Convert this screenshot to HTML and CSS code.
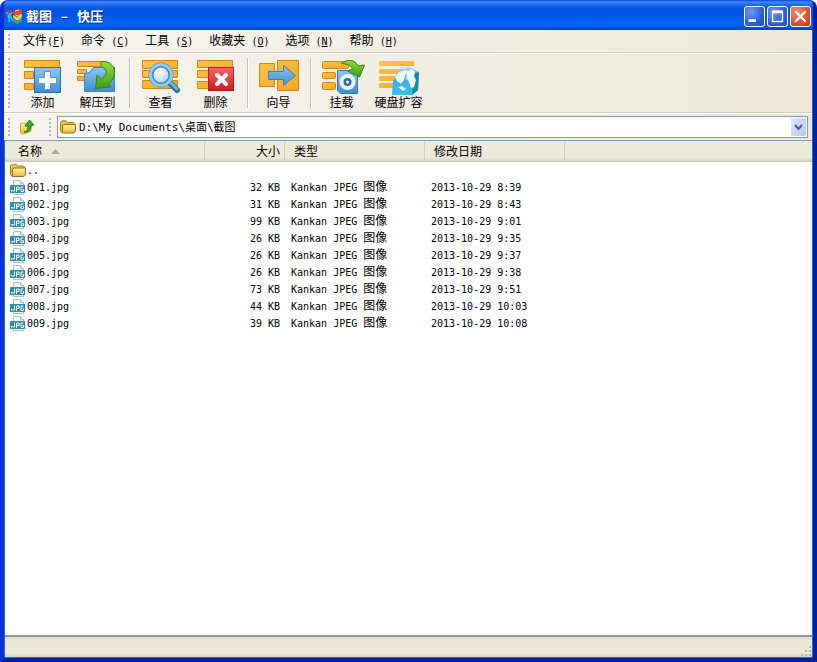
FILE: index.html
```html
<!DOCTYPE html>
<html lang="zh-CN">
<head>
<meta charset="utf-8">
<title>截图 - 快压</title>
<link rel="stylesheet" href="styles.css">
</head>
<body>
<svg class="defs" aria-hidden="true">
  <defs>
    <linearGradient id="orange" x1="0" y1="0" x2="1" y2="1"><stop offset="0" stop-color="#ffc44d"/><stop offset="1" stop-color="#f5a523"/></linearGradient>
    <linearGradient id="blue" x1="0" y1="0" x2="0" y2="1"><stop offset="0" stop-color="#8cc6ee"/><stop offset="1" stop-color="#3c8fd4"/></linearGradient>
    <linearGradient id="red" x1="0" y1="0" x2="0" y2="1"><stop offset="0" stop-color="#f36a63"/><stop offset="1" stop-color="#d0191d"/></linearGradient>
    <linearGradient id="green" x1="0" y1="0" x2="0" y2="1"><stop offset="0" stop-color="#8fdc34"/><stop offset="1" stop-color="#3d9f16"/></linearGradient>
    <linearGradient id="gold" x1="0" y1="0" x2="0" y2="1"><stop offset="0" stop-color="#fff6a6"/><stop offset="1" stop-color="#e9b730"/></linearGradient>
    <radialGradient id="lens" cx=".4" cy=".35" r=".7"><stop offset="0" stop-color="#fff"/><stop offset="1" stop-color="#a9c9dc"/></radialGradient>
    <linearGradient id="ice" x1="0" y1="0" x2="0" y2="1"><stop offset="0" stop-color="#9adcf2"/><stop offset=".5" stop-color="#38aee2"/><stop offset="1" stop-color="#36c2f0"/></linearGradient>
  </defs>
  <symbol id="folder" viewBox="0 0 16 14">
    <path d="M.5 11V2.5L2 .8h4l1.500 1.700h6l1 1V11l-1 1.500h-12z" fill="#eec34b" stroke="#a97b12"/>
    <path d="M2.500 5.500 4 4.500h11.500V11L14 13H2.500z" fill="url(#gold)" stroke="#9b7114"/>
  </symbol>
  <symbol id="jpg" viewBox="0 0 16 15">
    <path d="M3.500 .5h7l3 3v11h-10z" fill="#f5f8fa" stroke="#b3bec6"/>
    <path d="M10.500 .5v3h3" fill="#dce4ea" stroke="#b3bec6"/>
    <rect x="0" y="5" width="15" height="8" fill="#2c8fad"/>
    <path d="M4.500 6.500v4.500h-3v-1M6.500 12V7h2.500v2.500H6.500M13.500 7h-2.500v4.500h2.500V9.500h-1" fill="none" stroke="#fff"/>
  </symbol>
</svg>
<div class="window">
  <header class="titlebar">
    <svg class="app-icon" viewBox="0 0 16 16" aria-hidden="true">
      <path d="M0 5h2M1 8h3M3 5v9M6 4L4 8l3 5" fill="none" stroke="#35c5ee" stroke-width="1.500"/>
      <path d="M0 3l4-1 2 1-1 2-4-1z" fill="#e63422"/>
      <path d="M7 3l5-2 4 1v3l-5 3-4-2z" fill="#ed3b24"/>
      <path d="M7 7l4 2 5-3v3l-5 3-4-2z" fill="#f6cf24"/>
      <path d="M7 11l4 2 5-3v3l-5 3-4-2z" fill="#35ad38"/>
      <path d="M9 3l4-1M9 7l3 1 3-2M9 11l3 1 3-2" fill="none" stroke="#fff" stroke-opacity=".7"/>
    </svg>
    <h1 class="caption">截图<span class="dash">–</span>快压</h1>
    <button class="winbtn" aria-label="最小化"><svg viewBox="0 0 21 21"><path d="M4 15h8" stroke="#fff" stroke-width="3"/></svg></button>
    <button class="winbtn" aria-label="最大化"><svg viewBox="0 0 21 21"><path d="M5 16V5h11v11z" fill="none" stroke="#fff" stroke-width="1.500"/><path d="M4.500 5.500h12" stroke="#fff" stroke-width="3"/></svg></button>
    <button class="winbtn close" aria-label="关闭"><svg viewBox="0 0 21 21"><path d="M5.500 5.500l10 10M15.500 5.500l-10 10" stroke="#fff" stroke-width="2.500" stroke-linecap="round"/></svg></button>
  </header>

  <nav class="menubar">
    <i class="grip"></i>
    <button><b>文件</b>(<u>F</u>)</button>
    <button><b>命令</b> (<u>C</u>)</button>
    <button><b>工具</b> (<u>S</u>)</button>
    <button><b>收藏夹</b> (<u>O</u>)</button>
    <button><b>选项</b> (<u>N</u>)</button>
    <button><b>帮助</b> (<u>H</u>)</button>
  </nav>

  <div class="toolbar">
    <i class="grip"></i>
    <button><svg viewBox="0 0 42 36"><g fill="url(#orange)" stroke="#d9830f"><path d="M2.500 1.500h35v7h-35zM2.500 12.500h9v7h-9zM2.500 24.500h9v6h-9z"/></g><rect x="12.500" y="8.500" width="26" height="25" fill="url(#blue)" stroke="#2c73ad"/><path d="M22.500 12.500h6v6h6v6h-6v6h-6v-6h-6v-6h6z" fill="#fff" stroke="#5a9ccd"/></svg>添加</button>
    <button><svg viewBox="0 0 42 36"><g fill="url(#orange)" stroke="#d9830f"><path d="M.5 2.500h27v5h-27zM.5 10.500h9v4h-9zM.5 17.500h9v4h-9z"/></g><path d="M7.500 32.500v-18l5-1 4-5h21v24z" fill="url(#blue)" stroke="#3c86be"/><path d="M24 2.500c9-1 14 5 13.500 12C37 20 34 23 31 25l3 3-15.500 1.500L20 16l4.500 4c5-4 7.500-9-.5-12.500z" fill="url(#green)" stroke="#35860f"/></svg>解压到</button>
    <i class="separator"></i>
    <button><svg viewBox="0 0 42 36"><g fill="url(#orange)" stroke="#d9830f"><path d="M2.500 1.500h35v8h-35zM2.500 11.500h35v7h-35zM2.500 21.500h35v8h-35z"/></g><path d="M29 23l8 8" stroke="#2667a6" stroke-width="6" stroke-linecap="round"/><path d="M29 22l8 8" stroke="#72b7e8" stroke-width="3" stroke-linecap="round"/><circle cx="21" cy="16" r="10" fill="url(#lens)" stroke="#3987bd" stroke-width="5"/><circle cx="21" cy="16" r="10.500" fill="none" stroke="#8ccbf3" stroke-width="3"/></svg>查看</button>
    <button><svg viewBox="0 0 42 36"><g fill="url(#orange)" stroke="#d9830f"><path d="M2.500 1.500h35v7h-35zM2.500 11.500h12v7h-12zM2.500 22.500h12v7h-12z"/></g><rect x="13.500" y="8.500" width="25" height="23" fill="url(#red)" stroke="#b9171a"/><path d="M22 16l9 9M31 16l-9 9" stroke="#fff" stroke-width="4" stroke-linecap="round"/></svg>删除</button>
    <i class="separator"></i>
    <button><svg viewBox="0 0 42 36"><g fill="url(#orange)" stroke="#d9830f"><path d="M1.500 4.500h15v23h-15zM19.500 1.500h21v30h-21z"/></g><path d="M10.500 12.500h15v-6L37.500 16.500 25.500 26.500v-6h-15z" fill="url(#blue)" stroke="#3c7fb5"/></svg>向导</button>
    <i class="separator"></i>
    <button><svg viewBox="0 0 42 36"><g fill="url(#orange)" stroke="#d9830f"><rect x="1.500" y="2.500" width="26" height="7" rx="1"/><rect x="1.500" y="13.500" width="13" height="6" rx="1"/><rect x="1.500" y="23.500" width="13" height="7" rx="1"/></g><path d="M16.500 11.500h20v23h-17l-3-3z" fill="url(#blue)" stroke="#3974b4"/><circle cx="26.500" cy="23" r="8" fill="#e8f4fc"/><circle cx="26.500" cy="23" r="4" fill="#2c69ad"/><circle cx="26.500" cy="23" r="1.500" fill="#fff"/><path d="M20.500 4.500C26 0 34 0 37 7l6.500-1-5 12-12-6 5-2c-2-4-6-5-11-5.500z" fill="url(#green)" stroke="#35860f"/></svg>挂载</button>
    <button class="wide"><svg viewBox="0 0 42 36"><g fill="url(#orange)"><path d="M1 2h35v5H1zM1 10h35v5H1zM1 17h22v5H1zM1 24h15v5H1z"/></g><path d="M15 22l4-8 12-6 10 5-1 18-6 5H14z" fill="url(#ice)"/><path d="M36 14l5-1-1 18-6 5z" fill="#0d8da6"/><path d="M17 18l4-5 7-2 3 2-4 3-1 5-3 4-4-3zM30 12l4-2 3 3-1 4 2 4-2 7-3 1-2-6-3-4zM20 28l4-1 4 3-3 2z" fill="#edfbff"/></svg>硬盘扩容</button>
  </div>

  <div class="addressbar">
    <i class="grip"></i>
    <button class="up" aria-label="向上"><svg viewBox="0 0 16 16"><path d="M1.500 14V5L5 3.500l1 1.500 6-1v8L4 15z" fill="url(#gold)" stroke="#d8a936"/><path d="M5 13c4-1 4-3 4-6H6l4.500-6L15 6l-3 .5C12 11 10 14 5 13z" fill="#39b326" stroke="#238218"/></svg></button>
    <i class="grip"></i>
    <div class="combo">
      <svg class="folder"><use href="#folder"/></svg>
      <select aria-label="地址"><option>D:\My Documents\桌面\截图</option></select>
      <span class="arrow"><svg viewBox="0 0 15 18"><path d="M4 7l3.500 4L11 7" fill="none" stroke="#4d6185" stroke-width="2"/></svg></span>
    </div>
  </div>

  <main class="files">
    <table>
      <colgroup><col class="c-name"><col class="c-size"><col class="c-type"><col class="c-date"><col></colgroup>
      <thead><tr><th>名称<svg class="sort" viewBox="0 0 9 5"><path d="M0 5l4.500-5L9 5z" fill="#aca899"/></svg></th><th class="size">大小</th><th>类型</th><th>修改日期</th><th></th></tr></thead>
      <tbody>
        <tr><td><div class="name"><svg class="folder"><use href="#folder"/></svg>..</div></td><td></td><td></td><td></td><td></td></tr>
        <tr><td><div class="name"><svg><use href="#jpg"/></svg>001.jpg</div></td><td class="size">32 KB</td><td>Kankan JPEG <b>图像</b></td><td>2013-10-29 8:39</td><td></td></tr>
        <tr><td><div class="name"><svg><use href="#jpg"/></svg>002.jpg</div></td><td class="size">31 KB</td><td>Kankan JPEG <b>图像</b></td><td>2013-10-29 8:43</td><td></td></tr>
        <tr><td><div class="name"><svg><use href="#jpg"/></svg>003.jpg</div></td><td class="size">99 KB</td><td>Kankan JPEG <b>图像</b></td><td>2013-10-29 9:01</td><td></td></tr>
        <tr><td><div class="name"><svg><use href="#jpg"/></svg>004.jpg</div></td><td class="size">26 KB</td><td>Kankan JPEG <b>图像</b></td><td>2013-10-29 9:35</td><td></td></tr>
        <tr><td><div class="name"><svg><use href="#jpg"/></svg>005.jpg</div></td><td class="size">26 KB</td><td>Kankan JPEG <b>图像</b></td><td>2013-10-29 9:37</td><td></td></tr>
        <tr><td><div class="name"><svg><use href="#jpg"/></svg>006.jpg</div></td><td class="size">26 KB</td><td>Kankan JPEG <b>图像</b></td><td>2013-10-29 9:38</td><td></td></tr>
        <tr><td><div class="name"><svg><use href="#jpg"/></svg>007.jpg</div></td><td class="size">73 KB</td><td>Kankan JPEG <b>图像</b></td><td>2013-10-29 9:51</td><td></td></tr>
        <tr><td><div class="name"><svg><use href="#jpg"/></svg>008.jpg</div></td><td class="size">44 KB</td><td>Kankan JPEG <b>图像</b></td><td>2013-10-29 10:03</td><td></td></tr>
        <tr><td><div class="name"><svg><use href="#jpg"/></svg>009.jpg</div></td><td class="size">39 KB</td><td>Kankan JPEG <b>图像</b></td><td>2013-10-29 10:08</td><td></td></tr>
      </tbody>
    </table>
  </main>

  <footer class="statusbar">
    <svg viewBox="0 0 12 12" aria-hidden="true"><path d="M9 1h2v2H9zM9 5h2v2H9zM9 9h2v2H9zM5 5h2v2H5zM5 9h2v2H5zM1 9h2v2H1z" fill="#b8b4a2"/></svg>
  </footer>
</div>
</body>
</html>
```

FILE: styles.css
```css
* { box-sizing: border-box; }

body {
  margin: 0;
  background: #fff;
  color: #000;
  font: 10px/16px "DejaVu Sans Mono", "Noto Sans CJK SC", monospace;
}

button, select { font: inherit; color: inherit; }
button { border: 0; padding: 0; background: none; }
svg { display: block; flex: none; }
.defs { position: absolute; width: 0; height: 0; }

/* Chinese text runs two latin cells wide */
b { font-size: 12px; font-weight: 400; line-height: 16px; }

.window {
  display: flex;
  flex-direction: column;
  min-height: 100vh;
  border: solid #0831d9;
  border-width: 0 4px 4px;
  border-color: #0831d9 #001ea0 #001ea0 #0831d9;
  border-radius: 8px 8px 0 0;
  background: #ece9d8;
  box-shadow: inset 1px 0 #166aee, inset -1px -1px #166aee;
  overflow: hidden;
}

.titlebar {
  display: flex;
  align-items: center;
  gap: 2px;
  height: 30px;
  margin: 0 -4px;
  padding: 2px 6px 0;
  background: linear-gradient(#0a3fd0 0, #3c8cf8 2px, #1769ee 5px, #0055e5 9px, #0054e3 15px, #0463f8 22px, #0360f4 26px, #003dd7 30px);
}
.app-icon { width: 16px; height: 16px; }
.caption {
  flex: 1;
  margin: 0 0 0 2px;
  color: #fff;
  font: 700 13px/18px "Noto Sans CJK SC", sans-serif;
  text-shadow: 1px 1px #0a2a8c;
  white-space: nowrap;
}
.dash { margin: 0 9px; }
.winbtn {
  width: 21px;
  height: 21px;
  border: 1px solid #fff;
  border-radius: 3px;
  background: radial-gradient(circle at 30% 25%, #7199ee, #2b5fdf 60%, #1b4fd0);
}
.winbtn svg { width: 19px; height: 19px; }
.close { background: radial-gradient(circle at 30% 25%, #ee9279, #dc502c 60%, #c2380f); }

.grip {
  flex: none;
  align-self: stretch;
  width: 2px;
  margin: 4px 0;
  background: repeating-linear-gradient(#b9b6a7 0 2px, transparent 2px 4px);
}

.menubar, .toolbar, .addressbar {
  display: flex;
  margin: 0 1px 0 0;
  padding-left: 4px;
  background: linear-gradient(90deg, #f5f4f0, #ece9d8);
  border-bottom: 1px solid #d3cfbf;
}
.menubar { height: 23px; align-items: center; }
.menubar .grip { margin-right: 5px; }
.menubar button { padding: 0 8px; white-space: pre; }

.toolbar {
  height: 60px;
  border-top: 1px solid #fff;
}
.toolbar .grip { margin-right: 5px; }
.toolbar button {
  display: flex;
  flex-direction: column;
  align-items: center;
  width: 55px;
  padding-top: 5px;
  font-size: 12px;
}
.toolbar .wide { width: 59px; }
.toolbar svg { width: 42px; height: 36px; overflow: visible; }
.separator {
  width: 1px;
  margin: 4px 3px 4px 4px;
  background: #c5c2b2;
  box-shadow: 1px 0 #fff;
}

.addressbar {
  align-items: center;
  height: 28px;
  padding-right: 4px;
  border-top: 1px solid #fff;
  border-bottom-color: #7f9db9;
}
.up { width: 34px; }
.up svg { width: 16px; height: 16px; margin: 0 auto; }
.addressbar .up + .grip { margin-left: 5px; }
.combo {
  position: relative;
  display: flex;
  flex: 1;
  align-items: center;
  height: 22px;
  margin-left: 6px;
  padding-left: 2px;
  border: 1px solid #7f9db9;
  background: #fff;
}
.folder { width: 16px; height: 14px; }
.combo select {
  flex: 1;
  align-self: stretch;
  appearance: none;
  min-width: 0;
  border: 0;
  padding: 2px 20px 0 3px;
  background: none;
  font-size: 11px;
}
.arrow {
  position: absolute;
  top: 1px;
  right: 1px;
  bottom: 1px;
  width: 15px;
  border-radius: 2px;
  background: linear-gradient(135deg, #dfe8ff, #b3c6f4);
  pointer-events: none;
}

.files {
  flex: 1;
  margin: 0 1px;
  background: #fff;
}
table {
  width: 100%;
  table-layout: fixed;
  border-collapse: separate;
  border-spacing: 0;
}
.c-name { width: 200px; }
.c-size { width: 80px; }
.c-type, .c-date { width: 140px; }
th {
  height: 21px;
  padding: 1px 4px 0 9px;
  background: linear-gradient(#ebeadb 17px, #d6d2c2);
  border-bottom: 1px solid #cbc7b8;
  box-shadow: inset -1px 0 #d2cfbf;
  font-size: 12px;
  font-weight: 400;
  text-align: left;
}
th:first-child { padding-left: 13px; }
th:last-child { box-shadow: none; }
.sort { display: inline-block; width: 9px; height: 5px; margin-left: 9px; vertical-align: 2px; }
td { height: 17px; padding: 0 0 0 6px; white-space: nowrap; }
.size { padding-right: 5px; text-align: right; }
.name { display: flex; align-items: center; gap: 1px; height: 17px; }
td:first-child { padding-left: 5px; }
.name svg { width: 16px; height: 15px; }

.statusbar {
  display: flex;
  align-items: flex-end;
  justify-content: flex-end;
  height: 22px;
  margin: 0 1px 1px;
  border-top: 2px solid #8a9b8e;
  background: linear-gradient(#e2dfcd, #ece9d8 5px, #ece9d8 16px, #d9d5c3);
}
.statusbar svg { width: 12px; height: 12px; }
```
